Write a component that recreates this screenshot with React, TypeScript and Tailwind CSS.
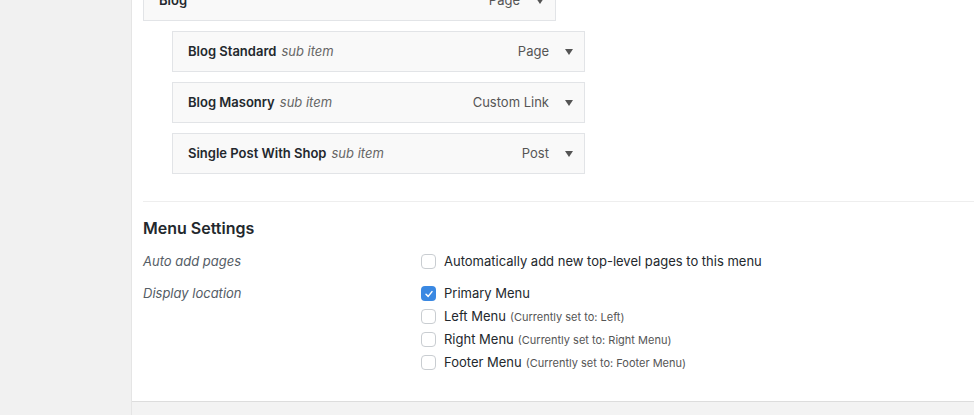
import React from "react";

type Item = { title: string; type: string; sub?: boolean };

const items: Item[] = [
  { title: "Blog", type: "Page" },
  { title: "Blog Standard", type: "Page", sub: true },
  { title: "Blog Masonry", type: "Custom Link", sub: true },
  { title: "Single Post With Shop", type: "Post", sub: true },
];

const locations = [
  { label: "Primary Menu", note: "", checked: true },
  { label: "Left Menu", note: "(Currently set to: Left)", checked: false },
  { label: "Right Menu", note: "(Currently set to: Right Menu)", checked: false },
  { label: "Footer Menu", note: "(Currently set to: Footer Menu)", checked: false },
];

function Checkbox({ checked }: { checked?: boolean }) {
  if (checked) {
    return (
      <span className="w-[15px] h-[15px] rounded-[4px] bg-[#3a88e2] flex items-center justify-center shrink-0">
        <svg width="10" height="10" viewBox="0 0 10 10">
          <path d="M2 5.2 L4.2 7.4 L8 2.6" fill="none" stroke="#fff" strokeWidth="1.5" strokeLinecap="round" strokeLinejoin="round" />
        </svg>
      </span>
    );
  }
  return <span className="w-[15px] h-[15px] rounded-[4px] border border-[#c9cdd1] bg-white shrink-0" />;
}

function MenuItem({ item }: { item: Item }) {
  return (
    <div
      className={`h-[41px] w-[413px] border border-[#e2e4e7] bg-[#f9f9f9] flex items-center pl-[15px] pr-[11px] ${
        item.sub ? "ml-[29px]" : ""
      }`}
    >
      <span className="font-semibold text-[#23282d] text-[13px]">{item.title}</span>
      {item.sub && <span className="italic text-[#666] text-[13px] ml-[5px]">sub item</span>}
      <span className="ml-auto text-[#555] text-[13px]">{item.type}</span>
      <span className="ml-[16px] w-0 h-0 border-l-[4px] border-r-[4px] border-t-[6px] border-l-transparent border-r-transparent border-t-[#555]" />
    </div>
  );
}

export default function App() {
  return (
    <div
      className="w-full h-[415px] flex bg-[#f1f1f1] overflow-hidden"
      style={{ fontFamily: 'Inter, "Liberation Sans", Arial, sans-serif' }}
    >
      <div className="w-[132px] shrink-0 border-r border-[#e5e5e5]" />
      <div className="flex-1 flex flex-col bg-white min-w-0">
        <div className="flex-1 overflow-hidden">
          <div className="pl-[11px]">
            <div className="flex flex-col gap-[10px] -mt-[20px]">
              {items.map((it) => (
                <MenuItem key={it.title} item={it} />
              ))}
            </div>
            <div className="mt-[27px] border-t border-[#eeeeee] pt-[16px]">
              <h3 className="text-[16px] leading-[20px] font-semibold text-[#23282d]">Menu Settings</h3>
              <div className="mt-[12px] grid grid-cols-[278px_1fr] text-[13px]">
                <div className="h-[23px] flex items-center italic text-[#555d66]">Auto add pages</div>
                <div className="h-[23px] flex items-center gap-[8px] text-[#23282d]">
                  <Checkbox />
                  <span>Automatically add new top-level pages to this menu</span>
                </div>
                <div className="mt-[9px] h-[23px] flex items-center italic text-[#555d66]">Display location</div>
                <div className="mt-[9px] flex flex-col">
                  {locations.map((l) => (
                    <div key={l.label} className="h-[23px] flex items-center gap-[8px] text-[#23282d]">
                      <Checkbox checked={l.checked} />
                      <span>
                        {l.label}
                        {l.note && <span className="text-[11px] text-[#555] ml-[4px]">{l.note}</span>}
                      </span>
                    </div>
                  ))}
                </div>
              </div>
            </div>
          </div>
        </div>
        <div className="h-[14px] shrink-0 border-t border-[#dddddd] bg-[#f3f3f3]" />
      </div>
    </div>
  );
}
